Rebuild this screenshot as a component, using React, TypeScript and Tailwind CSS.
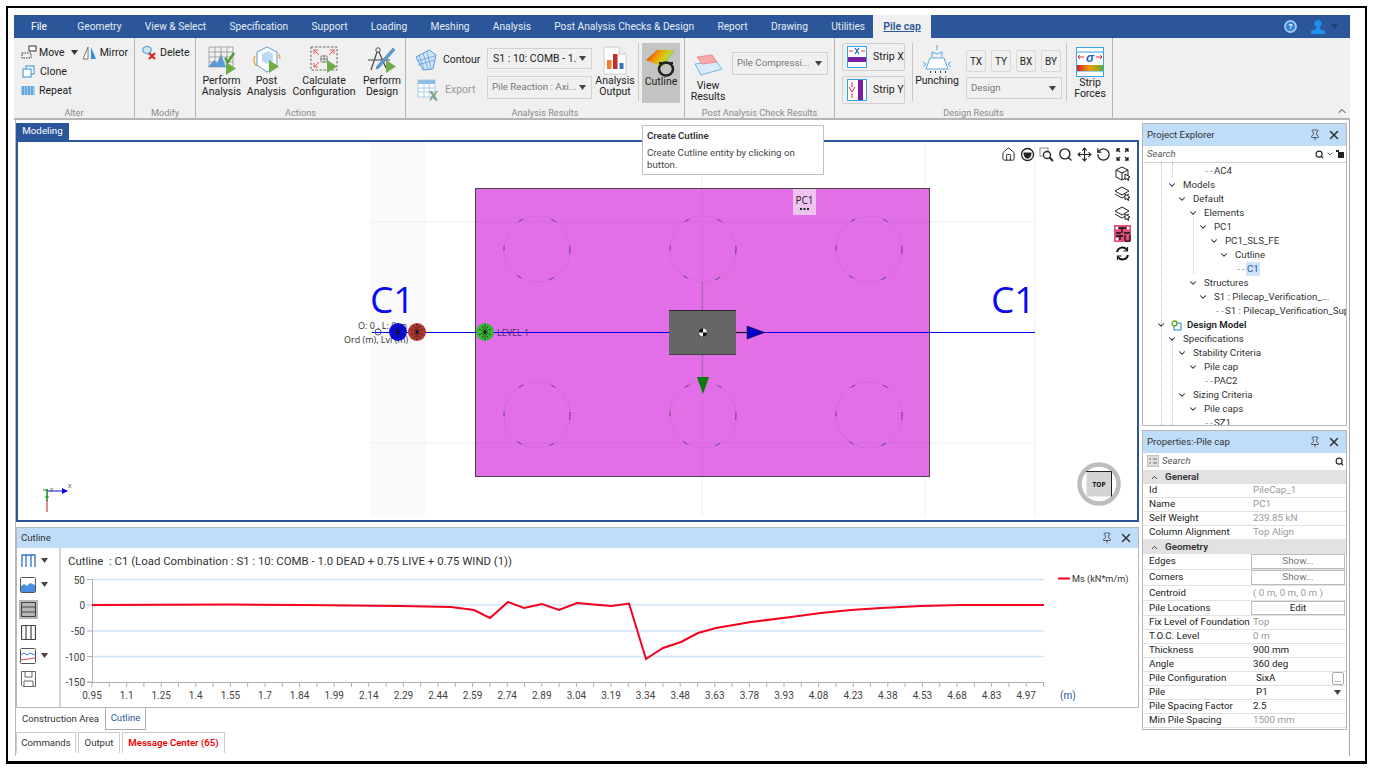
import type { ReactNode } from 'react'
import { ChevronDown, ChevronUp, Home, Move, Pin, RotateCcw, Search, X } from 'lucide-react'

const tabs = ['File', 'Geometry', 'View & Select', 'Specification', 'Support', 'Loading', 'Meshing', 'Analysis', 'Post Analysis Checks & Design', 'Report', 'Drawing', 'Utilities']

const xLabels = ['0.95', '1.1', '1.25', '1.4', '1.55', '1.7', '1.84', '1.99', '2.14', '2.29', '2.44', '2.59', '2.74', '2.89', '3.04', '3.19', '3.34', '3.48', '3.63', '3.78', '3.93', '4.08', '4.23', '4.38', '4.53', '4.68', '4.83', '4.97']

const curve = '91,605 230,604.5 300,605 400,606 450,607 473,610 489,618 507,602 523,608 541,604 558,610 576,603 610,606 628,603.5 645,659 662,648 680,642 697,633 715,628 750,622 790,617 820,613 850,610 880,608 920,606 960,605 1043,605'

const tree = [
  { text: 'AC4', x: 71, leaf: true },
  { text: 'Models', x: 40 },
  { text: 'Default', x: 50 },
  { text: 'Elements', x: 61 },
  { text: 'PC1', x: 71 },
  { text: 'PC1_SLS_FE', x: 82 },
  { text: 'Cutline', x: 92 },
  { text: 'C1', x: 103, leaf: true, selected: true },
  { text: 'Structures', x: 61 },
  { text: 'S1 : Pilecap_Verification_...', x: 71 },
  { text: 'S1 : Pilecap_Verification_Supe', x: 82, leaf: true },
  { text: 'Design Model', x: 44, model: true },
  { text: 'Specifications', x: 40 },
  { text: 'Stability Criteria', x: 50 },
  { text: 'Pile cap', x: 61 },
  { text: 'PAC2', x: 71, leaf: true },
  { text: 'Sizing Criteria', x: 50 },
  { text: 'Pile caps', x: 61 },
  { text: 'SZ1', x: 71, leaf: true },
]

function Caret({ className = 'text-[#444]' }: { className?: string }) {
  return (
    <svg width="7" height="5" viewBox="0 0 7 5" className={className}>
      <path d="M0 0h7L3.5 5z" fill="currentColor" />
    </svg>
  )
}

function Play({ x, y }: { x: number; y: number }) {
  return <path d={`M${x} ${y}l10 6.5-10 6.5z`} fill="#70ad47" />
}

function PerformAnalysisIcon() {
  return (
    <svg width="30" height="30" viewBox="0 0 30 30">
      <path d="M2 2h24M2 7h24M2 12h24M2 17h24M2 22h24M2 2v20M8 2v20M14 2v20M20 2v20M26 2v20" stroke="#7b7b7b" strokeWidth=".6" fill="none" />
      <path d="M1 22l6-7 3 3 4-9 5 13z" fill="#5b9bd5" />
      <path d="M18 13l3 4 6-9" stroke="#4c9a2a" strokeWidth="2.4" fill="none" />
      <Play x={19} y={17} />
    </svg>
  )
}

function PostAnalysisIcon() {
  return (
    <svg width="30" height="30" viewBox="0 0 30 30">
      <path d="M15 2l10 5v13l-10 7-10-7V7z" fill="#fff" stroke="#5b9bd5" />
      <path d="M10 9l6-3 5 3v7l-6 3-5-3z" fill="#bcd9f3" />
      <path d="M3 11c-2 4-1 8 2 10M27 9c1 2 1 3 1 5" stroke="#f0a030" strokeWidth="1.3" fill="none" />
      <Play x={17} y={15} />
    </svg>
  )
}

function ConfigurationIcon() {
  return (
    <svg width="30" height="30" viewBox="0 0 30 30">
      <rect x="2" y="2" width="26" height="23" fill="none" stroke="#666" strokeDasharray="2.5 1.5" />
      <path d="M5 5l5 5M5 5v4M5 5h4M25 5l-5 5M25 5v4M25 5h-4M5 22l5-5M5 22v-4M5 22h4" stroke="#e05050" fill="none" />
      <path d="M12 11h6v6h-6zM15 10v8M11 14h8" stroke="#666" strokeWidth=".7" fill="none" />
      <Play x={18} y={15} />
    </svg>
  )
}

function DesignIcon() {
  return (
    <svg width="30" height="30" viewBox="0 0 30 30">
      <circle cx="11" cy="5" r="2.2" fill="none" stroke="#555" />
      <path d="M10 7L4 25M12 7l7 16M1 15h22" stroke="#444" strokeWidth="1.2" fill="none" />
      <path d="M26 3l2 2-16 18-3 1 1-3z" fill="#5b9bd5" stroke="#2f6ea8" strokeWidth=".5" />
      <Play x={19} y={15} />
    </svg>
  )
}

function ContourIcon() {
  return (
    <svg width="22" height="22" viewBox="0 0 22 22">
      <path d="M1 8l13-7 7 5-3 14-10 1z" fill="#cfe4f7" stroke="#5b9bd5" />
      <path d="M4 6l5 14M8 4l5 16M12 2l4 18M2 12l18-5M3 16l16-5" stroke="#5b9bd5" strokeWidth=".7" />
    </svg>
  )
}

function ExcelIcon() {
  return (
    <svg width="22" height="22" viewBox="0 0 22 22">
      <rect x="1" y="1" width="17" height="17" fill="#fff" stroke="#a9cbe8" />
      <rect x="1" y="1" width="17" height="4" fill="#8fbde3" />
      <path d="M1 9h17M1 13h17M7 5v13M12 5v13" stroke="#a9cbe8" />
      <path d="M12 12h3l2 3 2-3h2l-3 4.500 3 5h-3l-2-3-2 3h-2l3-5z" fill="#7fa98a" />
    </svg>
  )
}

function OutputIcon() {
  return (
    <svg width="24" height="29" viewBox="0 0 24 29">
      <path d="M1 1h15l7 7v20H1z" fill="#fff" stroke="#ccc" />
      <path d="M16 1v7h7" fill="#eee" stroke="#ccc" />
      <rect x="4" y="14" width="4.500" height="9" fill="#ed7d31" />
      <rect x="10" y="8" width="4.500" height="15" fill="#c0302a" />
      <rect x="16.500" y="17" width="4" height="6" fill="#2f75b5" />
    </svg>
  )
}

function CutlineIcon() {
  return (
    <svg width="30" height="28" viewBox="0 0 30 28">
      <defs>
        <linearGradient id="rainbow" x1="0" y1="0" x2="1" y2="0.400">
          <stop offset="0" stopColor="#e01010" />
          <stop offset=".45" stopColor="#f0a000" />
          <stop offset=".75" stopColor="#c8d820" />
          <stop offset="1" stopColor="#38b0e0" />
        </linearGradient>
      </defs>
      <path d="M0 11L11 1h18l-12 17z" fill="url(#rainbow)" />
      <path d="M13 14h14" stroke="#222" strokeWidth="2" />
      <ellipse cx="20" cy="20" rx="7" ry="6.500" fill="none" stroke="#222" strokeWidth="2.600" />
    </svg>
  )
}

function ViewResultsIcon() {
  return (
    <svg width="29" height="22" viewBox="0 0 29 22">
      <path d="M1 10l21-3 6 8-21 6z" fill="#d8ecfb" stroke="#74b5e6" />
      <path d="M3 3l15-2 5 7-15 2z" fill="#f5a9a9" stroke="#e89090" />
    </svg>
  )
}

function StripIcon({ vertical }: { vertical?: boolean }) {
  if (vertical) {
    return (
      <svg width="20" height="22" viewBox="0 0 20 22" className="shrink-0">
        <rect x=".5" y=".5" width="19" height="21" fill="#fff" stroke="#38a3e8" />
        <rect x="11" y="1" width="5" height="20" fill="#7b1fa2" />
        <path d="M5 3v5M5 14v5M2 8l3 5 3-5" stroke="#d33" fill="none" />
      </svg>
    )
  }
  return (
    <svg width="20" height="22" viewBox="0 0 20 22" className="shrink-0">
      <rect x=".5" y=".5" width="19" height="21" fill="#fff" stroke="#38a3e8" />
      <rect x="1" y="11" width="18" height="5" fill="#7b1fa2" />
      <path d="M2 5h4M14 5h4" stroke="#d33" />
      <path d="M8 2l4 6M12 2L8 8" stroke="#2563c9" strokeWidth="1.300" />
    </svg>
  )
}

function PunchingIcon() {
  return (
    <svg width="32" height="30" viewBox="0 0 32 30">
      <path d="M16 0v5M11 12V7l5 2 5-2v5" stroke="#5aa7df" fill="none" />
      <path d="M9 13h14l4 11H5z" fill="#fff" stroke="#5aa7df" />
      <path d="M2 17l3 2-3 3M30 17l-3 2 3 3" stroke="#5aa7df" fill="none" />
      <path d="M9 27h1M14 27h1M19 27h1M24 27h1" stroke="#333" strokeWidth="2" />
    </svg>
  )
}

function StripForcesIcon() {
  return (
    <svg width="28" height="30" viewBox="0 0 28 30">
      <defs>
        <linearGradient id="strip" x1="0" y1="0" x2="1" y2="0">
          <stop offset="0" stopColor="#d42020" />
          <stop offset=".5" stopColor="#e8a000" />
          <stop offset="1" stopColor="#60b030" />
        </linearGradient>
      </defs>
      <rect x=".5" y=".5" width="27" height="29" fill="#fff" stroke="#38a3e8" />
      <path d="M1 5h26M1 24h26" stroke="#38a3e8" />
      <rect x="1" y="18" width="26" height="6" fill="url(#strip)" />
      <path d="M2 10h6M4 8l-2 2 2 2M20 10h6M24 8l2 2-2 2" stroke="#e03030" fill="none" />
      <text x="14" y="15" textAnchor="middle" fontSize="12" fontWeight="700" fontStyle="italic" fill="#1f5fc4" fontFamily="Liberation Sans, sans-serif">σ</text>
    </svg>
  )
}

function MoveIcon() {
  return (
    <svg width="16" height="15" viewBox="0 0 16 15">
      <rect x="8" y="1" width="7" height="5" fill="#fff" stroke="#333" />
      <rect x="1" y="8" width="9" height="5" fill="none" stroke="#333" strokeDasharray="1.500 1" />
    </svg>
  )
}

function MirrorIcon() {
  return (
    <svg width="15" height="14" viewBox="0 0 15 14">
      <path d="M6 1v12H1z" fill="#fff" stroke="#777" />
      <path d="M9 1v12h5z" fill="#2f8fd8" />
    </svg>
  )
}

function CloneIcon() {
  return (
    <svg width="13" height="13" viewBox="0 0 13 13">
      <rect x="4" y="1" width="8" height="8" fill="#fff" stroke="#2f8fd8" />
      <rect x="1" y="4" width="8" height="8" fill="#fff" stroke="#2f8fd8" />
    </svg>
  )
}

function RepeatIcon() {
  return (
    <svg width="14" height="9" viewBox="0 0 14 9">
      <rect width="14" height="9" fill="#9fcdf0" />
      <path d="M2 0v9M5 0v9M8 0v9M11 0v9" stroke="#2f7fc4" strokeWidth="1" />
    </svg>
  )
}

function DeleteIcon() {
  return (
    <svg width="15" height="15" viewBox="0 0 15 15">
      <path d="M1 3l4-2 4 2v4l-4 2-4-2z" fill="#cfe6f8" stroke="#3a9ad9" />
      <path d="M7 8l6 6M13 8l-6 6" stroke="#d92020" strokeWidth="2" />
    </svg>
  )
}

function Group({ className, label, children }: { className: string; label: string; children: ReactNode }) {
  return (
    <div className={`flex h-full shrink-0 flex-col border-r border-[#b5b5b5] ${className}`}>
      <div className="flex h-[70px] items-start">{children}</div>
      <div className="truncate text-center text-[9.2px] leading-[10px] text-[#8a8a8a]">{label}</div>
    </div>
  )
}

function LargeButton({ className, icon, lines }: { className: string; icon: ReactNode; lines: string[] }) {
  return (
    <div className={`flex shrink-0 flex-col items-center ${className}`}>
      <div className="flex h-[30px] items-center justify-center">{icon}</div>
      {lines.map((line) => (
        <div key={line} className="whitespace-nowrap text-[10.5px] leading-[11px] text-[#222]">
          {line}
        </div>
      ))}
    </div>
  )
}

function RibbonSelect({ className, text, dark }: { className: string; text: string; dark?: boolean }) {
  return (
    <div className={`flex items-center justify-between gap-[2px] overflow-hidden border border-[#d2d2d2] pl-[4px] pr-[5px] ${className}`}>
      <span className={`overflow-hidden whitespace-nowrap ${dark ? 'pl-[1px] text-[10.5px] text-[#222]' : 'text-[9.7px] text-[#777]'}`}>{text}</span>
      <Caret className="shrink-0 text-[#444]" />
    </div>
  )
}

function SmallButton({ label }: { label: string }) {
  return (
    <div className="flex h-[22px] w-[20px] items-center justify-center rounded-[2px] border border-[#d8d8d8] text-[10px] text-[#222]">
      {label}
    </div>
  )
}

function Ribbon() {
  return (
    <div className="flex h-[82px] border-b-2 border-[#b5b5b5] bg-[#f0f0f0]">
      <Group className="w-[121px]" label="Alter">
        <div className="flex flex-col gap-[4px] pl-[7px] pt-[7px] text-[10.5px] text-[#222]">
          <div className="flex h-[15px] items-center whitespace-nowrap">
            <MoveIcon />
            <span className="ml-[2px]">Move</span>
            <Caret className="ml-[6px] text-[#333]" />
            <span className="ml-[4px]"><MirrorIcon /></span>
            <span className="ml-[3px]">Mirror</span>
          </div>
          <div className="flex h-[15px] items-center gap-[5px] pl-[1px]"><CloneIcon />Clone</div>
          <div className="flex h-[15px] items-center gap-[4px]"><RepeatIcon />Repeat</div>
        </div>
      </Group>
      <Group className="w-[61px]" label="Modify">
        <div className="flex items-center gap-[3px] pl-[7px] pt-[7px] text-[10.5px] text-[#222]"><DeleteIcon />Delete</div>
      </Group>
      <Group className="w-[210px]" label="Actions">
        <LargeButton className="ml-[3px] w-[45px] pt-[7px]" icon={<PerformAnalysisIcon />} lines={['Perform', 'Analysis']} />
        <LargeButton className="w-[45px] pt-[7px]" icon={<PostAnalysisIcon />} lines={['Post', 'Analysis']} />
        <LargeButton className="w-[70px] pt-[7px]" icon={<ConfigurationIcon />} lines={['Calculate', 'Configuration']} />
        <LargeButton className="w-[46px] pt-[7px]" icon={<DesignIcon />} lines={['Perform', 'Design']} />
      </Group>
      <Group className="w-[279px]" label="Analysis Results">
        <div className="flex w-[81px] shrink-0 flex-col gap-[9px] pl-[9px] pt-[11px] text-[10.5px]">
          <div className="flex h-[21px] items-center gap-[6px] text-[#222]"><ContourIcon />Contour</div>
          <div className="flex h-[21px] items-center gap-[6px] pl-[2px] text-[#999]"><ExcelIcon />Export</div>
        </div>
        <div className="flex w-[105px] shrink-0 flex-col gap-[7px] pt-[10px]">
          <RibbonSelect className="h-[21px] w-[105px]" text="S1 : 10: COMB - 1.0" dark />
          <RibbonSelect className="h-[23px] w-[105px]" text="Pile Reaction : Axi..." />
        </div>
        <LargeButton className="ml-[3px] w-[40px] pt-[7px]" icon={<OutputIcon />} lines={['Analysis', 'Output']} />
        <div className="ml-[3px] mt-[5px] h-[58px] w-px shrink-0 bg-[#c8c8c8]" />
        <div className="ml-[3px] mt-[5px] flex h-[60px] w-[38px] shrink-0 flex-col items-center bg-[#c4c4c4] pt-[6px] text-[10.5px] text-[#222]">
          <CutlineIcon />
          <span className="leading-[10px]">Cutline</span>
        </div>
      </Group>
      <Group className="w-[150px]" label="Post Analysis Check Results">
        <LargeButton className="ml-[8px] w-[30px] pt-[12px]" icon={<ViewResultsIcon />} lines={['View', 'Results']} />
        <RibbonSelect className="ml-[9px] mt-[14px] h-[23px] w-[96px]" text="Pile Compressi..." />
      </Group>
      <Group className="w-[278px]" label="Design Results">
        <div className="flex w-[77px] shrink-0 flex-col gap-[5px] pl-[7px] pt-[5px] text-[10.5px] text-[#222]">
          <div className="flex h-[28px] w-[63px] items-center gap-[6px] whitespace-nowrap rounded-[2px] border border-[#d0d0d0] pl-[4px]"><StripIcon />Strip X</div>
          <div className="flex h-[28px] w-[63px] items-center gap-[6px] whitespace-nowrap rounded-[2px] border border-[#d0d0d0] pl-[4px]"><StripIcon vertical />Strip Y</div>
        </div>
        <div className="mt-[5px] h-[58px] w-px shrink-0 bg-[#c8c8c8]" />
        <LargeButton className="ml-[1px] w-[46px] pt-[7px]" icon={<PunchingIcon />} lines={['Punching']} />
        <div className="ml-[6px] flex w-[98px] shrink-0 flex-col gap-[5px] pt-[12px]">
          <div className="flex gap-[5px]">
            <SmallButton label="TX" />
            <SmallButton label="TY" />
            <SmallButton label="BX" />
            <SmallButton label="BY" />
          </div>
          <RibbonSelect className="h-[22px] w-[96px]" text="Design" />
        </div>
        <div className="ml-[2px] mt-[5px] h-[58px] w-px shrink-0 bg-[#c8c8c8]" />
        <LargeButton className="ml-[8px] w-[30px] pt-[9px]" icon={<StripForcesIcon />} lines={['Strip', 'Forces']} />
      </Group>
      <div className="flex flex-1 items-end justify-end pb-[1px] pr-[2px]">
        <ChevronUp className="h-[12px] w-[12px] text-[#333]" strokeWidth={2} />
      </div>
    </div>
  )
}

function TopBar() {
  return (
    <div className="flex h-[23px] items-stretch bg-[#2b579a] pl-[17px] text-[10.2px] text-[#e4ebf5]">
      <div className="flex items-center gap-[23.3px] whitespace-nowrap">
        {tabs.map((tab) => (
          <span key={tab} className={tab === 'File' ? 'mr-[7px] text-white' : ''}>{tab}</span>
        ))}
      </div>
      <div className="ml-[8px] flex w-[58px] items-center justify-center whitespace-nowrap bg-[#f0f0f0] text-[10.5px] font-semibold text-[#2b579a] underline">
        Pile cap
      </div>
      <div className="ml-auto flex items-center pr-[12px]">
        <div className="flex h-[13px] w-[13px] items-center justify-center rounded-full border-2 border-[#9cc5ef] bg-[#2f7fd8] text-[8px] font-bold leading-none text-white">?</div>
        <svg width="16" height="16" viewBox="0 0 16 16" className="ml-[13px]">
          <circle cx="8" cy="4.500" r="3.500" fill="#1e90f0" />
          <path d="M6 8h4v2l5 2v3H1v-3l5-2z" fill="#1e90f0" />
        </svg>
        <Caret className="ml-[5px] text-[#1f3f70]" />
      </div>
    </div>
  )
}

function Hatched({ cx, fill }: { cx: number; fill: string }) {
  return (
    <g>
      <circle cx={cx} cy="332" r="9" fill={fill} />
      <path d={`M${cx - 6} 329l12 6M${cx - 6} 335l12-6M${cx} 324v16M${cx - 3} 326l6 12M${cx + 3} 326l-6 12`} stroke="#111" strokeWidth=".7" strokeDasharray="2 .8" />
      <circle cx={cx} cy="332" r="1.500" fill="#111" />
    </g>
  )
}

function ModelDrawing() {
  const piles = [
    [537, 249],
    [703, 249],
    [869, 249],
    [537, 415],
    [703, 415],
    [869, 415],
  ]
  return (
    <svg width="1118" height="378" viewBox="18 142 1118 378" className="block" fontFamily="Open Sans, sans-serif">
      <rect x="370" y="143" width="55" height="374" fill="#fafafa" />
      <path d="M370 222h665M370 443h665M702 143v374M925 143v374M1035 143v374" stroke="#efefef" />
      <rect x="475.500" y="188.500" width="454" height="288" fill="#e26fe7" stroke="#444" />
      <path d="M476 222h453M476 443h453M702 189v287" stroke="#d06ad6" strokeWidth=".7" />
      {piles.map(([cx, cy]) => (
        <g key={`${cx}-${cy}`}>
          <circle cx={cx} cy={cy} r="33" fill="none" stroke="#b85cbe" strokeWidth=".7" strokeDasharray="1.500 1.500" />
          <circle cx={cx} cy={cy} r="33" fill="none" stroke="#333" strokeWidth=".7" strokeDasharray="5 29" />
        </g>
      ))}
      <rect x="793" y="189" width="23" height="26" fill="#efc3f0" />
      <text x="804.500" y="204" textAnchor="middle" fontSize="10" fill="#222">PC1</text>
      <path d="M800 209h2M803.500 209h2M807 209h2" stroke="#222" strokeWidth="2" />
      <path d="M372 332.500h663" stroke="#0000f0" strokeWidth="1.200" />
      <text x="370" y="313" fontSize="37" fill="#0a0af0">C1</text>
      <text x="991" y="313" fontSize="37" fill="#0a0af0">C1</text>
      <text x="358" y="329" fontSize="9" fill="#333">O: 0 , L: 0 m</text>
      <text x="344" y="343" fontSize="9" fill="#333">Ord (m), Lvl (m)</text>
      <circle cx="378" cy="332" r="3" fill="none" stroke="#555" />
      <Hatched cx={398} fill="#0a0ae0" />
      <Hatched cx={417} fill="#b03a32" />
      <Hatched cx={485} fill="#38b838" />
      <text x="497" y="336" fontSize="9" fill="#4b2a70">LEVEL 1</text>
      <path d="M702.500 282v96" stroke="#a868b0" strokeWidth="1.200" />
      <path d="M736 332.500h12" stroke="#111" strokeWidth="1.200" />
      <rect x="669" y="310" width="67" height="45" fill="#666" />
      <path d="M669 310.500h67" stroke="#222" />
      <path d="M669 354.500h67" stroke="#444" />
      <circle cx="703" cy="332.500" r="4" fill="#111" />
      <path d="M703 328.500a4 4 0 0 1 4 4h-4zM703 332.500h-4a4 4 0 0 0 4 4z" fill="#eee" />
      <path d="M747 326l18 6.500-18 6.500z" fill="#0000c8" stroke="#111" strokeWidth=".5" />
      <path d="M697 377h12l-6 17z" fill="#087a08" />
      <circle cx="1099" cy="484" r="19.500" fill="none" stroke="#bdbdbd" strokeWidth="4.500" />
      <rect x="1086.500" y="471.500" width="25" height="25" fill="#d4d4d4" />
      <path d="M1086 471.500h25.500v25" fill="none" stroke="#222" />
      <text x="1099" y="487" textAnchor="middle" fontSize="6.500" fontWeight="700" fill="#111">TOP</text>
      <path d="M47 491h20" fill="none" stroke="#0a0ae0" strokeWidth="1" />
      <path d="M47 500v12" stroke="#c02020" />
      <path d="M47 489v12" stroke="#1a8a1a" strokeWidth="1.500" />
      <path d="M43 490h5M45 497h4" stroke="#1a8a1a" />
      <path d="M62 488l6 3-6 3z" fill="#0a0ae0" />
      <text x="68" y="488" fontSize="6" fill="#333">X</text>
      <text x="50" y="492" fontSize="6" fill="#333">Y</text>
    </svg>
  )
}

function ViewTools() {
  const cube = 'M7 2l6 3v7l-6 3-6-3V5z M1 5l6 3 6-3 M7 8v7'
  const layers = 'M7 2l7 4-7 4-7-4z M0 9l7 4 7-4'
  return (
    <>
      <div className="absolute right-[7px] top-[5px] flex items-center gap-[4px] text-[#222]">
        <Home className="h-[15px] w-[15px]" strokeWidth={1.500} />
        <svg width="15" height="15" viewBox="0 0 15 15">
          <circle cx="7.500" cy="7.500" r="6" fill="none" stroke="#222" strokeWidth="1.300" />
          <path d="M3.500 5.500h8c0 4-2 6-4 6s-4-2-4-6z" fill="#222" />
        </svg>
        <svg width="15" height="15" viewBox="0 0 15 15">
          <rect x="1" y="1" width="8" height="8" fill="none" stroke="#888" />
          <circle cx="8" cy="8" r="3.500" fill="#fff" stroke="#222" strokeWidth="1.300" />
          <path d="M10.500 10.500l3.500 3.500" stroke="#222" strokeWidth="1.800" />
        </svg>
        <Search className="h-[15px] w-[15px]" strokeWidth={2.200} />
        <Move className="h-[15px] w-[15px]" strokeWidth={1.800} />
        <RotateCcw className="h-[15px] w-[15px]" strokeWidth={2} />
        <svg width="15" height="15" viewBox="0 0 15 15" fill="none" stroke="#222" strokeWidth="1.300">
          <path d="M2 5V2h3M2 2l3 3M13 5V2h-3M13 2l-3 3M2 10v3h3M2 13l3-3M13 10v3h-3M13 13l-3-3" />
        </svg>
      </div>
      <div className="absolute right-[7px] top-[23px] flex w-[15px] flex-col items-center gap-[4px]">
        <svg width="16" height="16" viewBox="0 0 16 16" fill="none" stroke="#222"><path d={cube} /><path d="M10 9l5 3-2 1 1 2-1 .5-1-2-2 1z" fill="#fff" /></svg>
        <svg width="16" height="16" viewBox="0 0 16 16" fill="none" stroke="#222"><path d={layers} /><path d="M10 9l5 3-2 1 1 2-1 .5-1-2-2 1z" fill="#fff" /></svg>
        <svg width="16" height="16" viewBox="0 0 16 16" fill="none" stroke="#222"><path d={layers} /><path d="M10 9l5 3-2 1 1 2-1 .5-1-2-2 1z" fill="#fff" /></svg>
        <svg width="17" height="17" viewBox="0 0 17 17">
          <rect width="17" height="17" fill="#e0507a" />
          <path d="M3 3h11M8 3v5M2 8h5M10 8h6M11 10v4a2.500 2.500 0 0 0 5 0v-4M6 10v5M2 11h7" stroke="#111" strokeWidth="1.300" fill="none" />
          <circle cx="3" cy="3" r="1.500" fill="#fff" />
          <circle cx="14" cy="3" r="1.500" fill="#fff" />
          <circle cx="3" cy="14" r="1.500" fill="#fff" />
        </svg>
        <svg width="15" height="15" viewBox="0 0 15 15" fill="none" stroke="#111" strokeWidth="1.800">
          <path d="M2 6a5.500 5.500 0 0 1 10-2M13 9a5.500 5.500 0 0 1-10 2" />
          <path d="M12.500 1v4h-4M2.500 14v-4h4" strokeWidth="1.200" />
        </svg>
      </div>
    </>
  )
}

function Chart() {
  const ticks = Array.from({ length: 56 }, (_, i) => 91 + i * 17.3)
  return (
    <svg width="1077" height="133" viewBox="60 574 1077 133" className="block" fontFamily="Roboto, sans-serif">
      {[579.500, 605, 631, 656.500].map((y) => (
        <path key={y} d={`M91 ${y}h952`} stroke="#d0e4fa" strokeWidth="1.300" />
      ))}
      <path d="M91.500 579v103M86 682.500h957" stroke="#b0b0b0" fill="none" />
      {[579.500, 605, 631, 656.500, 682].map((y) => (
        <path key={y} d={`M86 ${y}h5`} stroke="#b0b0b0" />
      ))}
      {ticks.map((x) => (
        <path key={x} d={`M${x} 682v5`} stroke="#b0b0b0" />
      ))}
      {[
        ['50', 580],
        ['0', 605],
        ['-50', 631],
        ['-100', 657],
        ['-150', 682],
      ].map(([label, y]) => (
        <text key={label} x="84" y={Number(y) + 3.500} textAnchor="end" fontSize="10" fill="#444">{label}</text>
      ))}
      {xLabels.map((label, i) => (
        <text key={label} x={91 + i * 34.6} y="699" textAnchor="middle" fontSize="10" fill="#444">{label}</text>
      ))}
      <text x="1059" y="699" fontSize="10" fill="#2b579a">(m)</text>
      <polyline points={curve} fill="none" stroke="#f5001e" strokeWidth="2" />
      <path d="M1057 578.500h12" stroke="#f5001e" strokeWidth="2" />
      <text x="1071" y="582" fontSize="9.200" fill="#333">Ms (kN*m/m)</text>
    </svg>
  )
}

function ChartTools() {
  return (
    <div className="flex w-[44px] shrink-0 flex-col border-r-2 border-[#d4d4d4] pl-[1px] pt-[5px]">
      <div className="flex h-[24px] items-start gap-[5px] pl-[3px]">
        <svg width="15" height="15" viewBox="0 0 15 15" fill="none" stroke="#2f6fd8" strokeWidth="1.300">
          <path d="M1 14V2h13v12M5 2v12M10 2v12" />
        </svg>
        <Caret className="mt-[5px] text-[#444]" />
      </div>
      <div className="flex h-[23px] items-start gap-[5px] pl-[2px]">
        <svg width="16" height="16" viewBox="0 0 16 16">
          <rect x=".5" y=".5" width="15" height="15" rx="1" fill="#fff" stroke="#555" />
          <path d="M1 9l3-2 3 2 3-3 5 2v7H1z" fill="#4a90e2" />
        </svg>
        <Caret className="mt-[5px] text-[#444]" />
      </div>
      <div className="ml-[1px] flex h-[19px] w-[19px] items-center justify-center bg-[#b8b8b8]">
        <svg width="15" height="15" viewBox="0 0 15 15" fill="none" stroke="#444" strokeWidth="1.200"><rect x=".5" y=".5" width="14" height="14" rx="1" /><path d="M1 5h13M1 10h13" /></svg>
      </div>
      <div className="mt-[6px] pl-[3px]">
        <svg width="15" height="15" viewBox="0 0 15 15" fill="none" stroke="#444" strokeWidth="1.200"><rect x=".5" y=".5" width="14" height="14" rx="1" /><path d="M5 1v13M10 1v13" /></svg>
      </div>
      <div className="mt-[8px] flex h-[23px] items-start gap-[5px] pl-[2px]">
        <svg width="16" height="16" viewBox="0 0 16 16" fill="none">
          <rect x=".5" y=".5" width="15" height="15" rx="1" fill="#fff" stroke="#555" />
          <path d="M1 7l3-2 3 2 3-2 5 2" stroke="#3a7fd8" />
          <path d="M1 12l14-2" stroke="#e05050" />
        </svg>
        <Caret className="mt-[5px] text-[#444]" />
      </div>
      <div className="pl-[3px]">
        <svg width="15" height="16" viewBox="0 0 15 16" fill="none" stroke="#666"><path d="M.5.500h14v15H2l-1.500-1.500z" /><path d="M4 1v5h7V1M3 15v-5h9v5" /></svg>
      </div>
    </div>
  )
}

function PanelHeader({ title, className = 'h-[22px]' }: { title: string; className?: string }) {
  return (
    <div className={`flex shrink-0 items-center justify-between bg-[#bfdcf9] pl-[4px] pr-[5px] text-[9.6px] text-[#333] ${className}`}>
      <span>{title}</span>
      <span className="flex items-center gap-[6px] text-[#333]">
        <Pin className="h-[12px] w-[12px]" strokeWidth={1.500} />
        <X className="h-[14px] w-[14px]" strokeWidth={2.500} />
      </span>
    </div>
  )
}

function ProjectExplorer() {
  return (
    <div className="flex h-[303px] flex-col border border-[#b8b8b8]">
      <PanelHeader title="Project Explorer" />
      <div className="flex h-[17px] shrink-0 items-center justify-between border-b border-[#d0d0d0] pl-[4px] pr-[2px] text-[9.6px] italic text-[#555]">
        <span>Search</span>
        <span className="flex items-center gap-[2px] not-italic text-[#222]">
          <Search className="h-[9px] w-[9px]" strokeWidth={3} />
          <ChevronDown className="h-[8px] w-[8px]" />
          <svg width="8" height="8" viewBox="0 0 8 8"><path d="M0 0h3v2h5v6H2V2H0z" fill="#222" /></svg>
        </span>
      </div>
      <div className="relative flex-1 overflow-hidden pt-[1px] text-[9.7px] leading-[14px] text-[#333]">
        <div className="absolute bottom-0 left-[18px] top-0 border-l border-dotted border-[#bbb]" />
        <div className="absolute left-[29px] top-0 h-[14px] border-l border-dotted border-[#bbb]" />
        <div className="absolute bottom-0 left-[29px] top-[175px] border-l border-dotted border-[#bbb]" />
        <div className="absolute left-[50px] top-[50px] h-[60px] border-l border-dotted border-[#ccc]" />
        {tree.map((row) => (
          <div key={row.text} className="relative flex h-[14px] items-center whitespace-nowrap" style={{ paddingLeft: row.x }}>
            {row.leaf ? (
              <span className="absolute top-[7px] w-[8px] border-t border-dashed border-[#bbb]" style={{ left: row.x - 9 }} />
            ) : (
              <ChevronDown className="absolute h-[10px] w-[10px] text-[#222]" strokeWidth={2.500} style={{ left: row.model ? 13 : row.x - 16 }} />
            )}
            {row.model && (
              <svg width="11" height="11" viewBox="0 0 11 11" className="absolute left-[28px]">
                <rect x="3" y="3" width="7" height="7" fill="none" stroke="#2f7fd8" />
                <circle cx="3.500" cy="3.500" r="2.500" fill="#fff" stroke="#58a818" strokeWidth="1.300" />
              </svg>
            )}
            <span className={row.selected ? 'bg-[#cde4fb] px-[1px] text-[#2b579a]' : row.model ? 'font-semibold text-[#222]' : ''}>{row.text}</span>
          </div>
        ))}
      </div>
    </div>
  )
}

function PropRow({ label, value, dark, className = 'h-[14px]', children }: { label: string; value?: string; dark?: boolean; className?: string; children?: ReactNode }) {
  return (
    <div className={`flex items-center border-b border-[#e2e2e2] text-[9.8px] ${className}`}>
      <div className="w-[108px] shrink-0 overflow-hidden whitespace-nowrap pl-[6px] text-[#222]">{label}</div>
      {children ?? <div className={`pl-[2px] ${dark ? 'text-[#222]' : 'text-[#9a9a9a]'}`}>{value}</div>}
    </div>
  )
}

function PropSection({ label }: { label: string }) {
  return (
    <div className="flex h-[14px] items-center gap-[6px] bg-[#e2e2e2] pl-[7px] text-[9.8px] font-semibold text-[#333]">
      <ChevronUp className="h-[9px] w-[9px]" strokeWidth={2.500} />
      {label}
    </div>
  )
}

function ShowButton({ text, dark }: { text: string; dark?: boolean }) {
  return (
    <div className={`flex h-full w-[94px] items-center justify-center border border-[#bbb] bg-white ${dark ? 'text-[#222]' : 'text-[#777]'}`}>
      {text}
    </div>
  )
}

function Properties() {
  return (
    <div className="mt-[4px] flex h-[300px] flex-col overflow-hidden border border-[#b8b8b8]">
      <PanelHeader title="Properties:-Pile cap" />
      <div className="flex h-[17px] shrink-0 items-center justify-between pl-[4px] pr-[2px] text-[9.6px] italic text-[#555]">
        <span className="flex items-center gap-[3px]">
          <svg width="12" height="12" viewBox="0 0 12 12"><rect width="12" height="12" fill="#ddd" stroke="#aaa" /><path d="M2 4h2M6 4h4M2 8h2M6 8h4" stroke="#777" /></svg>
          Search
        </span>
        <Search className="h-[9px] w-[9px] text-[#222]" strokeWidth={3} />
      </div>
      <PropSection label="General" />
      <PropRow label="Id" value="PileCap_1" />
      <PropRow label="Name" value="PC1" />
      <PropRow label="Self Weight" value="239.85 kN" />
      <PropRow label="Column Alignment" value="Top Align" />
      <PropSection label="Geometry" />
      <PropRow label="Edges" className="h-[16px]"><ShowButton text="Show..." /></PropRow>
      <PropRow label="Corners" className="h-[16px]"><ShowButton text="Show..." /></PropRow>
      <PropRow label="Centroid" className="h-[15px]" value="( 0 m, 0 m, 0 m )" />
      <PropRow label="Pile Locations" className="h-[15px]"><ShowButton text="Edit" dark /></PropRow>
      <PropRow label="Fix Level of Foundation" value="Top" />
      <PropRow label="T.O.C. Level" value="0 m" />
      <PropRow label="Thickness" value="900 mm" dark />
      <PropRow label="Angle" value="360 deg" dark />
      <PropRow label="Pile Configuration">
        <div className="flex flex-1 items-center justify-between pl-[5px] text-[#222]">
          SixA
          <span className="mr-[2px] flex h-[13px] w-[12px] items-end justify-center rounded-[2px] border border-[#aaa] text-[8px] leading-[9px]">...</span>
        </div>
      </PropRow>
      <PropRow label="Pile">
        <div className="flex flex-1 items-center justify-between pl-[5px] pr-[5px] text-[#222]">
          P1
          <Caret className="text-[#444]" />
        </div>
      </PropRow>
      <PropRow label="Pile Spacing Factor" value="2.5" dark />
      <PropRow label="Min Pile Spacing" value="1500 mm" />
    </div>
  )
}

function TabBox({ children, className }: { children: ReactNode; className: string }) {
  return <div className={`flex items-center justify-center whitespace-nowrap text-[9.6px] ${className}`}>{children}</div>
}

export default function App() {
  return (
    <div className="h-[777px] w-[1377px] overflow-hidden bg-white pl-[6px] pt-[6px] font-['Roboto',sans-serif]">
      <div className="h-[758px] w-[1361px] border-2 border-b-[3px] border-black pl-[6px] pt-[7px]">
        <div className="w-[1336px]">
          <TopBar />
          <Ribbon />
          <div className="flex">
            <div className="relative ml-[1px] w-[1125px] shrink-0 border-l border-[#b8b8b8] pt-[3px]">
              <div className="flex h-[17px] w-[53px] items-center justify-center bg-[#2b579a] text-[9.8px] text-white">Modeling</div>
              <div className="relative h-[382px] w-[1123px] border-2 border-[#2b579a]">
                <ModelDrawing />
                <ViewTools />
              </div>
              <div className="mt-[5px] w-[1123px] border border-[#b8b8b8]">
                <PanelHeader title="Cutline" className="h-[20px]" />
                <div className="flex h-[159px]">
                  <ChartTools />
                  <div className="flex flex-1 flex-col">
                    <div className="flex h-[27px] items-center whitespace-pre pl-[7px] text-[11.4px] text-[#333]">Cutline  : C1 (Load Combination : S1 : 10: COMB - 1.0 DEAD + 0.75 LIVE + 0.75 WIND (1))</div>
                    <div className="-mt-px"><Chart /></div>
                  </div>
                </div>
              </div>
              <div className="flex h-[22px]">
                <TabBox className="w-[89px] text-[#333]">Construction Area</TabBox>
                <TabBox className="w-[41px] border-x border-b border-[#aaa] bg-white text-[#2b579a]">Cutline</TabBox>
              </div>
              <div className="mt-[2px] flex h-[21px] gap-[2px]">
                <TabBox className="w-[60px] border-x border-t border-[#ccc] text-[#333]">Commands</TabBox>
                <TabBox className="w-[42px] border-x border-t border-[#ccc] text-[#333]">Output</TabBox>
                <TabBox className="w-[103px] border-x border-t border-[#ccc] font-semibold text-[#f00000]">Message Center (65)</TabBox>
              </div>
              <div className="absolute left-[626px] top-[5px] flex h-[50px] w-[182px] flex-col border border-[#c0c0c0] bg-white pl-[4px] pt-[4px] text-[9.7px] leading-[12px] text-[#444]">
                <span className="font-semibold text-[#333]">Create Cutline</span>
                <span className="mt-[5px] w-[170px]">Create Cutline entity by clicking on button.</span>
              </div>
            </div>
            <div className="ml-[2px] h-[636px] w-[208px] shrink-0 border-r border-[#aaa] pr-[2px] pt-[3px]">
              <ProjectExplorer />
              <Properties />
            </div>
          </div>
        </div>
      </div>
    </div>
  )
}
